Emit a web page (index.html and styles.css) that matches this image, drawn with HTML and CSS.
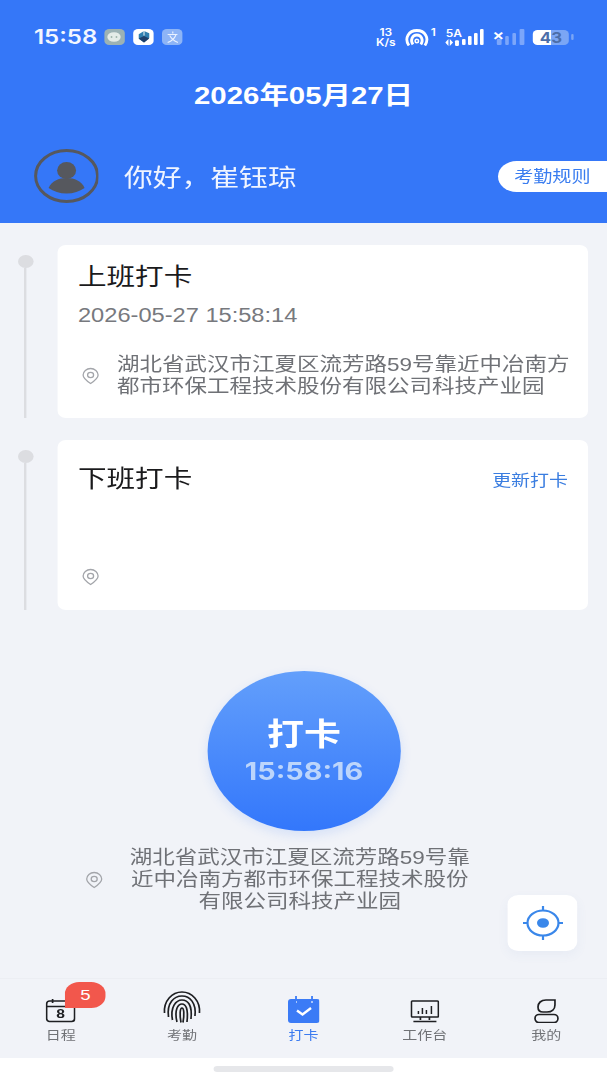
FILE: index.html
```html
<!DOCTYPE html>
<html lang="zh-CN">

<head>
    <meta charset="UTF-8">
    <meta name="viewport" content="width=device-width, initial-scale=1.0">
    <title>打卡</title>
    <link rel="stylesheet" href="styles.css">
</head>

<body>
    <div class="page">
        <header class="header">
            <div class="status-bar">
                <span class="status-time">15:58</span>
                <span class="app-icon app-wechat">
                    <svg width="12" height="11" viewBox="0 0 14 11" preserveAspectRatio="none"><ellipse cx="7" cy="5" rx="6.5" ry="4.8" fill="#e4ece8"/><circle cx="4.6" cy="5" r="0.9" fill="#9db3ab"/><circle cx="9.4" cy="5" r="0.9" fill="#9db3ab"/></svg>
                </span>
                <span class="app-icon app-cube">
                    <svg width="12" height="14" viewBox="0 0 15 15" preserveAspectRatio="none"><path d="M7.5 1l5.500 2.500v5L7.500 13.500 2 9.500v-5z" fill="#2f7fb0"/><path d="M2 9l5.500-2.500L13 9l-5.500 4.500z" fill="#1e3f6b"/><path d="M7.500 1v5" stroke="#fff" stroke-width="1"/></svg>
                </span>
                <span class="app-icon app-translate">
                    <svg width="12" height="14" viewBox="0 0 14 14" preserveAspectRatio="none" fill="none" stroke="#eaf2ff" stroke-width="1.1"><path d="M7 1.500v2M2 4.500h9.500M10 5C8.500 9 6 11 2 12.500M4 5.500c1.500 3 4 5.500 8 7"/></svg>
                </span>
                <div class="status-right">
                    <span class="net-speed">13<br>K/s</span>
                    <svg class="hotspot" width="20.800" height="17" viewBox="0 0 25 17" preserveAspectRatio="none" fill="none" stroke="#fff" stroke-width="2.800"><path d="M4.500 16.500C-.5 9 4.500 1.500 12.500 1.500S25.500 9 20.500 16.500"/><path d="M8.500 15.500C5.500 11 8 6 12.500 6s7 5 4 9.500"/><circle cx="12.500" cy="12" r="1.700" stroke-width="1.600"/></svg>
                    <span class="hotspot-num">1</span>
                    <span class="signal-group">
                        <span class="signal-label">5A</span>
                        <svg class="signal-arrows" width="12" height="7" viewBox="0 0 11 6" preserveAspectRatio="none" fill="#fff"><path d="M0 3l2.500-3v6zM6 3L3.500 0v6z"/><rect x="7.500" y="1" width="3" height="5" rx="1"/></svg>
                    </span>
                    <span class="bars">
                        <i class="bar bar-1"></i><i class="bar bar-2"></i><i class="bar bar-3"></i><i class="bar bar-4"></i>
                    </span>
                    <span class="signal-x">×</span>
                    <span class="bars bars-dim">
                        <i class="bar bar-1"></i><i class="bar bar-2"></i><i class="bar bar-3"></i><i class="bar bar-4"></i>
                    </span>
                    <span class="battery"><span class="battery-num">43</span></span>
                    <span class="battery-tip"></span>
                </div>
            </div>
            <div class="date">2026年05月27日</div>
            <div class="user-row">
                <svg class="avatar" width="54.170" height="54" viewBox="0 0 65 54" preserveAspectRatio="none">
                    <ellipse cx="33" cy="27" rx="31" ry="25.500" fill="none" stroke="#56585e" stroke-width="3"/>
                    <ellipse cx="33" cy="21.500" rx="9.500" ry="8.500" fill="#56585e"/>
                    <path d="M15 39c3-7 10-10 18-10s15 3 18 10c-5 3.500-11 5.500-18 5.500s-13-2-18-5.500z" fill="#56585e"/>
                </svg>
                <span class="greeting">你好，崔钰琼</span>
                <span class="rule-btn">考勤规则</span>
            </div>
        </header>

        <main class="main">
            <section class="record">
                <div class="timeline"><span class="dot"></span><span class="line"></span></div>
                <div class="card card-in">
                    <div class="card-title">上班打卡</div>
                    <div class="card-time">2026-05-27 15:58:14</div>
                    <div class="card-loc">
                        <svg class="pin" width="15" height="18" viewBox="0 0 18 18" preserveAspectRatio="none" fill="none" stroke="#a3a5aa" stroke-width="1.300"><path d="M9 16.500C4.500 13.500 1.500 11 1.500 8a7.500 6.500 0 0 1 15 0c0 3-3 5.500-7.500 8.500z"/><ellipse cx="9" cy="8" rx="3" ry="2.600"/></svg>
                        <span>湖北省武汉市江夏区流芳路59号靠近中冶南方<br>都市环保工程技术股份有限公司科技产业园</span>
                    </div>
                </div>
            </section>

            <section class="record">
                <div class="timeline"><span class="dot"></span><span class="line"></span></div>
                <div class="card card-out">
                    <div class="card-head">
                        <div class="card-title">下班打卡</div>
                        <span class="update-link">更新打卡</span>
                    </div>
                    <div class="card-loc card-loc-empty">
                        <svg class="pin" width="15" height="18" viewBox="0 0 18 18" preserveAspectRatio="none" fill="none" stroke="#a3a5aa" stroke-width="1.300"><path d="M9 16.500C4.500 13.500 1.500 11 1.500 8a7.500 6.500 0 0 1 15 0c0 3-3 5.500-7.500 8.500z"/><ellipse cx="9" cy="8" rx="3" ry="2.600"/></svg>
                    </div>
                </div>
            </section>

            <div class="clock-btn">
                <span class="clock-label">打卡</span>
                <span class="clock-time">15:58:16</span>
            </div>

            <div class="here">
                <svg class="pin" width="15" height="18" viewBox="0 0 18 18" preserveAspectRatio="none" fill="none" stroke="#a3a5aa" stroke-width="1.300"><path d="M9 16.500C4.500 13.500 1.500 11 1.500 8a7.500 6.500 0 0 1 15 0c0 3-3 5.500-7.500 8.500z"/><ellipse cx="9" cy="8" rx="3" ry="2.600"/></svg>
                <div class="here-text">湖北省武汉市江夏区流芳路59号靠<br>近中冶南方都市环保工程技术股份<br>有限公司科技产业园</div>
            </div>

            <div class="locate-btn">
                <svg width="35" height="36" viewBox="0 0 42 36" preserveAspectRatio="none" fill="none" stroke="#3a87ea" stroke-width="2.200"><ellipse cx="21" cy="18" rx="15.500" ry="12.500"/><path d="M21 1v5M21 30v5M1 18h5M36 18h5"/><ellipse cx="21" cy="18" rx="6" ry="4.800" fill="#3a87ea" stroke="none"/></svg>
            </div>
        </main>

        <nav class="tabbar">
            <div class="tab">
                <span class="badge">5</span>
                <svg class="tab-icon" width="25" height="25" viewBox="0 0 30 25" preserveAspectRatio="none" fill="none" stroke="#1e1f22" stroke-width="1.700"><rect x="1" y="3" width="28" height="20.500" rx="3"/><path d="M1 8.500h28M7 1v4"/></svg>
                <span class="cal-num">8</span>
                <span class="tab-text">日程</span>
            </div>
            <div class="tab">
                <svg class="tab-icon" width="33.300" height="32" viewBox="0 0 40 32" preserveAspectRatio="none" fill="none" stroke="#1e1f22" stroke-width="1.700">
                    <path d="M2.500 22C1.500 10 10 1 20 1s18.500 9 17.500 21"/>
                    <path d="M6.500 26C4.500 12 12 5 20 5s14.500 7 13 20"/>
                    <path d="M10.500 29C8 16 14 9 20 9s10.500 5 9 19"/>
                    <path d="M15 31c-3-12 1-18 5-18s6.500 5 5 18"/>
                    <path d="M19 31.500c-1.500-8-1-14.500 1-14.500s2.500 6 1 14.500"/>
                </svg>
                <span class="tab-text">考勤</span>
            </div>
            <div class="tab tab-active">
                <svg class="tab-icon" width="26.700" height="27" viewBox="0 0 32 27" preserveAspectRatio="none"><rect x="0" y="3" width="32" height="24" rx="3" fill="#3b7bf6"/><path d="M8 0v6M24 0v6" stroke="#3b7bf6" stroke-width="1.800"/><path d="M8 6h1M23 6h2" stroke="#cfe0fd" stroke-width="1.500"/><path d="M9 14.500l5.500 4L23 12" fill="none" stroke="#fff" stroke-width="2.400"/></svg>
                <span class="tab-text">打卡</span>
            </div>
            <div class="tab">
                <svg class="tab-icon" width="24.200" height="23" viewBox="0 0 29 23" preserveAspectRatio="none" fill="none" stroke="#1e1f22" stroke-width="1.700"><rect x="1" y="1" width="27" height="16" rx="1"/><path d="M10 20v-3M19 20v-3M3 21.500h23"/><path d="M8 14v-3M12 14V8M16 14v-4M21 14V6" stroke-width="1.500"/></svg>
                <span class="tab-text">工作台</span>
            </div>
            <div class="tab">
                <svg class="tab-icon" width="20.800" height="24" viewBox="0 0 25 24" preserveAspectRatio="none" fill="none" stroke="#1e1f22" stroke-width="1.700"><path d="M4 8c0-4 3-7 8-7h9v5c0 4-3 7-8 7H9c-3 0-5-2-5-5z"/><rect x="1" y="15.500" width="23" height="8" rx="4"/></svg>
                <span class="tab-text">我的</span>
            </div>
        </nav>

        <div class="home-bar"><span class="home-indicator"></span></div>
    </div>
</body>

</html>
```

FILE: styles.css
```css
* {
    box-sizing: border-box;
}

body {
    margin: 0;
    overflow: hidden;
    font-family: "Liberation Sans", "Noto Sans CJK SC", sans-serif;
    background-color: #f1f3f8;
}

/* the whole screen is wider than tall by 1.2, everything below is in unstretched px */
.page {
    width: 505.83px;
    height: 1080px;
    display: flex;
    flex-direction: column;
    transform: scaleX(1.2);
    transform-origin: left top;
}

/* header */

.header {
    height: 223px;
    flex-shrink: 0;
    background-color: #3577f8;
    color: #fff;
    padding-top: 24px;
}

.status-bar {
    height: 26px;
    display: flex;
    align-items: center;
    padding: 0 28.3px;
}

.status-time {
    font-family: Inter, sans-serif;
    font-size: 20px;
    font-weight: 600;
    color: #f2f6ff;
    margin-right: 6px;
}

.app-icon {
    width: 16.7px;
    height: 16px;
    border-radius: 4px;
    margin-right: 7.5px;
    display: flex;
    align-items: center;
    justify-content: center;
}

.app-wechat {
    background-color: #9cb2b4;
}

.app-cube {
    background-color: #fff;
}

.app-translate {
    background-color: #8db4f6;
}

.status-right {
    margin-left: auto;
    display: flex;
    align-items: center;
    color: #fff;
    font-family: Inter, sans-serif;
    font-weight: 600;
}

.net-speed {
    font-size: 10px;
    line-height: 10.5px;
    text-align: center;
    width: 16.7px;
    margin-right: 7.5px;
}

.hotspot-num {
    width: 4.2px;
    font-size: 10px;
    margin: -10px 8.3px 0 0.8px;
}

.signal-group {
    width: 13.3px;
    display: flex;
    flex-direction: column;
    align-items: flex-start;
    font-size: 10px;
    line-height: 10px;
}

.signal-arrows {
    display: block;
    margin-top: 1px;
}

.bars {
    display: flex;
    align-items: flex-end;
    gap: 2px;
    height: 16px;
    margin-right: 6.7px;
}

.bars-dim {
    opacity: 0.35;
    gap: 3.2px;
    margin-right: 7.5px;
}

.bar {
    display: block;
    width: 3.2px;
    border-radius: 1px;
    background-color: #fff;
}

.bar-1 {
    height: 6px;
}

.bar-2 {
    height: 9px;
}

.bar-3 {
    height: 12px;
}

.bar-4 {
    height: 16px;
}

.signal-x {
    font-size: 15px;
    line-height: 11px;
    align-self: flex-start;
    margin-top: 2px;
    width: 4.2px;
}

.battery {
    width: 30px;
    height: 15px;
    border-radius: 4px;
    background: linear-gradient(to right, #fff 0 15px, #7ba6f5 15px);
    display: flex;
    align-items: center;
    justify-content: center;
}

.battery-num {
    font-size: 14px;
    font-weight: 700;
    color: #4c6ea8;
}

.battery-tip {
    width: 1.7px;
    height: 6px;
    margin-left: 1.7px;
    border-radius: 1px;
    background-color: #7ba6f5;
}

.date {
    margin-top: 31px;
    text-align: center;
    font-size: 24.5px;
    line-height: 30px;
    font-weight: 700;
}

.user-row {
    margin-top: 38px;
    height: 54px;
    display: flex;
    align-items: center;
    padding-left: 28.3px;
}

.greeting {
    margin-left: 20.8px;
    margin-top: -2px;
    font-size: 24px;
    color: #f0f5ff;
}

.rule-btn {
    margin-left: auto;
    width: 90.83px;
    height: 31px;
    padding-left: 13.5px;
    border-radius: 16px 0 0 16px;
    background-color: #fff;
    color: #3a7df0;
    font-size: 15.9px;
    line-height: 31px;
}

/* records */

.main {
    position: relative;
    flex: 1;
    padding-top: 22px;
}

.record {
    display: flex;
    padding-left: 15px;
    margin-bottom: 22px;
}

.timeline {
    width: 12.5px;
    margin-right: 20.83px;
    padding-top: 10px;
    display: flex;
    flex-direction: column;
    align-items: center;
}

.dot {
    width: 12.5px;
    height: 13px;
    border-radius: 50%;
    background-color: #dcdde1;
    flex-shrink: 0;
}

.line {
    flex: 1;
    width: 2px;
    background-color: #dcdde1;
}

.card {
    width: 441.67px;
    border-radius: 7px;
    background-color: #fff;
    padding: 16px 16.67px 0;
}

.card-in {
    height: 173px;
}

.card-out {
    height: 170px;
}

.card-head {
    display: flex;
    justify-content: space-between;
    align-items: center;
    margin-top: 7px;
}

.card-title {
    font-size: 23.8px;
    line-height: 32px;
    color: #1a1a1c;
}

.update-link {
    font-size: 15.8px;
    color: #3a7de0;
}

.card-time {
    margin-top: 9px;
    font-size: 19.7px;
    line-height: 26px;
    color: #77797e;
}

.card-loc {
    margin-top: 26px;
    display: flex;
    align-items: center;
    font-size: 18.75px;
    line-height: 22px;
    color: #6f7176;
}

.card-loc span {
    flex: 1;
    white-space: nowrap;
}

.card-loc .pin {
    margin: 0 14.2px 0 3.3px;
    flex-shrink: 0;
}

.card-loc-empty {
    margin-top: 73px;
}

/* clock button */

.clock-btn {
    width: 161.67px;
    height: 160px;
    margin: 61px 0 0 172.5px;
    border-radius: 50%;
    background: linear-gradient(to bottom, #639ffb, #3377fb);
    box-shadow: 0 4px 10px rgba(53, 119, 248, 0.15);
    display: flex;
    flex-direction: column;
    align-items: center;
    padding-top: 44px;
}

.clock-label {
    font-size: 30.8px;
    line-height: 40px;
    font-weight: 700;
    color: #fff;
}

.clock-time {
    margin-top: 3px;
    font-family: Inter, sans-serif;
    font-size: 24px;
    line-height: 28px;
    font-weight: 700;
    color: #bcd5fb;
}

.here {
    margin-top: 16px;
    padding-left: 70.8px;
    display: flex;
    align-items: center;
}

.here .pin {
    flex-shrink: 0;
    margin-right: 19px;
}

.here-text {
    width: 290px;
    text-align: center;
    white-space: nowrap;
    font-size: 18.75px;
    line-height: 22px;
    color: #6f7176;
}

.locate-btn {
    position: absolute;
    left: 423.3px;
    top: 672px;
    width: 57.5px;
    height: 56px;
    border-radius: 9px;
    background-color: #fff;
    box-shadow: 0 4px 10px rgba(90, 120, 190, 0.06);
    display: flex;
    align-items: center;
    justify-content: center;
}

/* tab bar */

.tabbar {
    height: 80px;
    flex-shrink: 0;
    display: flex;
    border-top: 1px solid #eceef3;
}

.tab {
    position: relative;
    width: 101.17px;
    height: 79px;
    display: flex;
    flex-direction: column;
    align-items: center;
    justify-content: flex-end;
    padding-bottom: 13px;
    color: #707276;
}

.tab-text {
    font-size: 12.5px;
    line-height: 18px;
    margin-top: 4px;
}

.tab-active {
    color: #3b7bf0;
}

.badge {
    position: absolute;
    left: 54.2px;
    top: 3px;
    width: 34.2px;
    height: 26px;
    border-radius: 12px 12px 12px 0;
    background-color: #f2574c;
    color: #fff;
    font-size: 15.5px;
    line-height: 26px;
    text-align: center;
    z-index: 1;
}

.cal-num {
    position: absolute;
    left: 0;
    right: 0;
    top: 27px;
    text-align: center;
    font-size: 13px;
    line-height: 16px;
    font-weight: 700;
    color: #1e1f22;
}

.home-bar {
    height: 22px;
    flex-shrink: 0;
    background-color: #fff;
    padding: 8px 0 0 177.5px;
}

.home-indicator {
    display: block;
    width: 150.83px;
    height: 6px;
    border-radius: 3px;
    background-color: #e6e7ea;
}
```
